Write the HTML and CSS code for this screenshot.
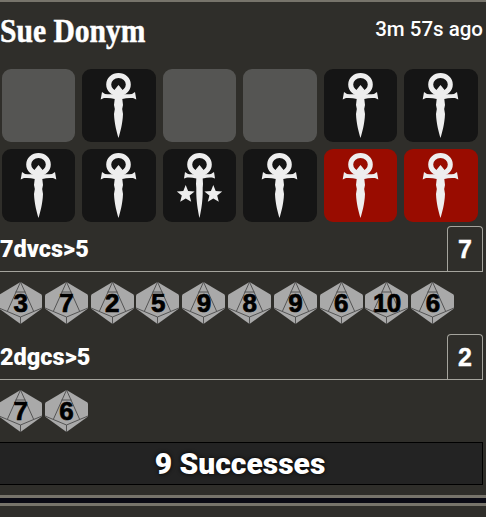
FILE: index.html
```html
<!DOCTYPE html>
<html lang="en">
<head>
<meta charset="UTF-8" />
<meta name="viewport" content="width=device-width, initial-scale=1.0"/>
<title>Dice Roll</title>
<link rel="stylesheet" href="styles.css">
</head>
<body>

<svg class="defs" width="0" height="0">
  <symbol id="ankh" viewBox="0 0 73 73">
    <ellipse cx="36.5" cy="15.5" rx="9.8" ry="9" fill="none" stroke="currentColor" stroke-width="5"/>
    <path fill="currentColor" d="M36.5 16 L40.2 20.5 L39 25 Q45 25.5 50 25 L53 23 L54.3 30.5 L51 29 Q45 28.5 40.3 30 L41 36 L40.2 40 L41 45 C40.6 55 38 64 36.5 69 C35 64 32.4 55 32 45 L32.8 40 L32 36 L32.7 30 Q28 28.5 22 29 L18.7 30.5 L20 23 L23 25 Q28 25.5 34 25 L32.8 20.5 Z"/>
  </symbol>
  <symbol id="ankh-stars" viewBox="0 0 73 73">
    <ellipse cx="36.5" cy="15.5" rx="9.8" ry="9" fill="none" stroke="currentColor" stroke-width="5"/>
    <path fill="currentColor" d="M36.5 16 L40.2 20.5 L39 25 Q45 25.5 48 25 L51 23 L52 29.5 L49 28.5 Q45 28 39.7 29.5 L40 35 L39.7 39 L39.7 45 C39.4 55 37.6 64 36.5 69 C35.4 64 33.6 55 33.3 45 L33.3 39 L33 35 L33.3 29.5 Q28 28 24 28.5 L21 29.5 L22 23 L25 25 Q28 25.5 34 25 L32.8 20.5 Z"/>
    <path fill="currentColor" d="M22.7 36 L25.1 42 L31.6 42.4 L26.6 46.5 L28.2 52.8 L22.7 49.4 L17.2 52.8 L18.8 46.5 L13.8 42.4 L20.3 42 Z"/>
    <path fill="currentColor" d="M50.3 36 L52.7 42 L59.2 42.4 L54.2 46.5 L55.8 52.8 L50.3 49.4 L44.8 52.8 L46.4 46.5 L41.4 42.4 L47.9 42 Z"/>
  </symbol>
  <symbol id="d10" viewBox="0 0 43 42">
    <path fill="#a9a9a9" d="M21.5 0 L42.5 12.5 L43 14 L43 26.5 L21.5 42 L0 26.5 L0 14 L0.5 12.5 Z"/>
    <path fill="none" stroke="#4a4a4a" stroke-width="0.9" d="M21.5 0 L8.5 29 M21.5 0 L34.5 29 M16.5 10 L26.5 10 M0 26 L21.5 35 L43 26 M21.5 35 L21.5 42"/>
  </symbol>
</svg>

<div class="roll">
  <header class="roll-head">
    <h1 class="player">Sue Donym</h1>
    <span class="ago">3m 57s ago</span>
  </header>

  <div class="tiles">
    <div class="tile empty"></div>
    <div class="tile"><svg><use href="#ankh"/></svg></div>
    <div class="tile empty"></div>
    <div class="tile empty"></div>
    <div class="tile"><svg><use href="#ankh"/></svg></div>
    <div class="tile"><svg><use href="#ankh"/></svg></div>
    <div class="tile"><svg><use href="#ankh"/></svg></div>
    <div class="tile"><svg><use href="#ankh"/></svg></div>
    <div class="tile"><svg><use href="#ankh-stars"/></svg></div>
    <div class="tile"><svg><use href="#ankh"/></svg></div>
    <div class="tile hunger"><svg><use href="#ankh"/></svg></div>
    <div class="tile hunger"><svg><use href="#ankh"/></svg></div>
  </div>

  <div class="formula first">
    <span class="expr">7dvcs&gt;5</span>
    <span class="sum">7</span>
  </div>
  <div class="dice">
    <div class="die"><svg><use href="#d10"/></svg><span>3</span></div>
    <div class="die"><svg><use href="#d10"/></svg><span>7</span></div>
    <div class="die"><svg><use href="#d10"/></svg><span>2</span></div>
    <div class="die"><svg><use href="#d10"/></svg><span>5</span></div>
    <div class="die"><svg><use href="#d10"/></svg><span>9</span></div>
    <div class="die"><svg><use href="#d10"/></svg><span>8</span></div>
    <div class="die"><svg><use href="#d10"/></svg><span>9</span></div>
    <div class="die"><svg><use href="#d10"/></svg><span>6</span></div>
    <div class="die"><svg><use href="#d10"/></svg><span>10</span></div>
    <div class="die"><svg><use href="#d10"/></svg><span>6</span></div>
  </div>

  <div class="formula">
    <span class="expr">2dgcs&gt;5</span>
    <span class="sum">2</span>
  </div>
  <div class="dice">
    <div class="die"><svg><use href="#d10"/></svg><span>7</span></div>
    <div class="die"><svg><use href="#d10"/></svg><span>6</span></div>
  </div>

  <div class="total">9 Successes</div>
  <div class="divider"></div>
</div>

</body>
</html>
```

FILE: styles.css
```css
:root {
  --bg: #2f2e2a;
  --line: #a5a49d;
  --bar: #77746b;
  --tile-dark: #151515;
  --tile-empty: #555553;
  --hunger: #990c00;
}

body {
  margin: 0;
  background: var(--bg);
  color: #fff;
  font-family: Roboto, "Noto Sans", sans-serif;
  overflow: hidden;
}

.defs {
  display: block;
  height: 0;
}

.roll {
  border-top: 2px solid var(--bar);
  padding-right: 3px;
}

.roll-head {
  display: flex;
  align-items: center;
  justify-content: space-between;
  height: 57px;
  margin-bottom: 10px;
}

.player {
  margin: 0;
  font-family: "Liberation Serif", serif;
  font-size: 34px;
  font-weight: bold;
  -webkit-text-stroke: 0.5px #fff;
  transform: scaleX(0.87);
  transform-origin: left center;
  white-space: nowrap;
}

.ago {
  font-size: 20.5px;
  font-weight: 500;
  margin-bottom: 4px;
}

.tiles {
  display: grid;
  grid-template-columns: repeat(6, 1fr);
  gap: 7px;
  width: 476px;
  margin-left: 1.6px;
}

.tile {
  height: 73px;
  border-radius: 9px;
  background: var(--tile-dark);
  color: #eee;
  display: flex;
  justify-content: center;
}

.tile svg {
  width: 73px;
  height: 73px;
}

.tile.empty {
  background: var(--tile-empty);
}

.tile.hunger {
  background: var(--hunger);
}

.formula {
  display: flex;
  justify-content: space-between;
  align-items: center;
  height: 45px;
  margin-top: 10px;
  border-bottom: 1px solid var(--line);
}

.formula.first {
  margin-top: 4px;
}

.expr {
  font-size: 23.5px;
  font-weight: 900;
  line-height: 26px;
}

.sum {
  box-sizing: border-box;
  align-self: stretch;
  width: 36px;
  border: 1px solid var(--line);
  border-bottom: none;
  border-radius: 4px 4px 0 0;
  font-family: "Liberation Sans", sans-serif;
  font-size: 25px;
  font-weight: bold;
  -webkit-text-stroke: 0.4px #fff;
  display: flex;
  align-items: center;
  justify-content: center;
}

.dice {
  display: flex;
  gap: 2.8px;
  margin: 10px 0 0 -1px;
}

.die {
  display: grid;
  width: 43px;
  height: 42px;
  color: #000;
  place-items: center;
}

.die svg {
  grid-area: 1 / 1;
  width: 43px;
  height: 42px;
}

.die span {
  grid-area: 1 / 1;
  font-family: "Liberation Sans", sans-serif;
  font-size: 26px;
  font-weight: bold;
  line-height: 1;
  letter-spacing: -0.5px;
  -webkit-text-stroke: 0.7px #000;
}

.total {
  box-sizing: border-box;
  height: 43px;
  margin-top: 10px;
  background: #232323;
  border: 1px solid #000;
  border-left: none;
  font-size: 30px;
  font-weight: 900;
  line-height: 41px;
  text-align: center;
  padding-right: 2px;
  text-shadow: 0 0 4px #000;
}

.divider {
  height: 5px;
  margin: 10px -3px 0 0;
  background: #0a0a14;
  border-top: 3px solid var(--bar);
  border-bottom: 3px solid var(--bar);
}
```
